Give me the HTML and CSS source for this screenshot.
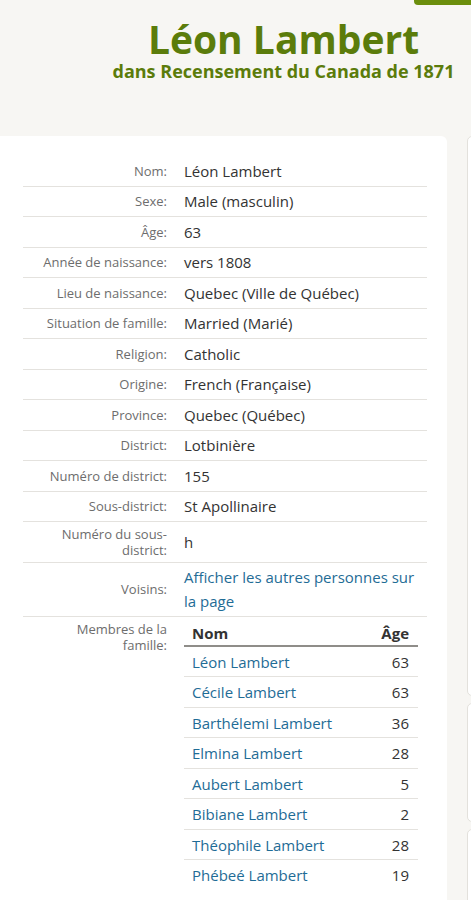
FILE: index.html
```html
<!DOCTYPE html>
<html lang="fr">
<head>
<meta charset="utf-8">
<title>Léon Lambert - Recensement du Canada de 1871</title>
<link rel="stylesheet" href="styles.css">
</head>
<body>
<div class="topbar"><span class="tab"></span></div>
<header class="title-block">
  <h1 class="title">Léon Lambert</h1>
  <p class="subtitle">dans Recensement du Canada de 1871</p>
</header>
<div class="layout">
  <main class="card record">
    <div class="row"><div class="label">Nom:</div><div class="value">Léon Lambert</div></div>
    <div class="row"><div class="label">Sexe:</div><div class="value">Male (masculin)</div></div>
    <div class="row"><div class="label">Âge:</div><div class="value">63</div></div>
    <div class="row"><div class="label">Année de naissance:</div><div class="value">vers 1808</div></div>
    <div class="row"><div class="label">Lieu de naissance:</div><div class="value">Quebec (Ville de Québec)</div></div>
    <div class="row"><div class="label">Situation de famille:</div><div class="value">Married (Marié)</div></div>
    <div class="row"><div class="label">Religion:</div><div class="value">Catholic</div></div>
    <div class="row"><div class="label">Origine:</div><div class="value">French (Française)</div></div>
    <div class="row"><div class="label">Province:</div><div class="value">Quebec (Québec)</div></div>
    <div class="row"><div class="label">District:</div><div class="value">Lotbinière</div></div>
    <div class="row"><div class="label">Numéro de district:</div><div class="value">155</div></div>
    <div class="row"><div class="label">Sous-district:</div><div class="value">St Apollinaire</div></div>
    <div class="row"><div class="label two">Numéro du sous-district:</div><div class="value">h</div></div>
    <div class="row"><div class="label">Voisins:</div><div class="value"><a class="link" href="#">Afficher les autres personnes sur la page</a></div></div>
    <div class="row row-top last"><div class="label two">Membres de la famille:</div>
      <div class="value">
        <table class="members">
          <thead><tr><th class="c-name">Nom</th><th class="c-age">Âge</th></tr></thead>
          <tbody>
            <tr><td class="c-name"><a class="link" href="#">Léon Lambert</a></td><td class="c-age">63</td></tr>
            <tr><td class="c-name"><a class="link" href="#">Cécile Lambert</a></td><td class="c-age">63</td></tr>
            <tr><td class="c-name"><a class="link" href="#">Barthélemi Lambert</a></td><td class="c-age">36</td></tr>
            <tr><td class="c-name"><a class="link" href="#">Elmina Lambert</a></td><td class="c-age">28</td></tr>
            <tr><td class="c-name"><a class="link" href="#">Aubert Lambert</a></td><td class="c-age">5</td></tr>
            <tr><td class="c-name"><a class="link" href="#">Bibiane Lambert</a></td><td class="c-age">2</td></tr>
            <tr><td class="c-name"><a class="link" href="#">Théophile Lambert</a></td><td class="c-age">28</td></tr>
            <tr><td class="c-name"><a class="link" href="#">Phébeé Lambert</a></td><td class="c-age">19</td></tr>
          </tbody>
        </table>
      </div>
    </div>
  </main>
  <aside class="side">
    <div class="side-card side-card-a"></div>
    <div class="side-card side-card-b"></div>
    <div class="side-card side-card-c"></div>
  </aside>
</div>
</body>
</html>
```
FILE: styles.css
```css
html, body {
  margin: 0;
  padding: 0;
}
body {
  background: #f7f6f3;
  font-family: "Open Sans", Lato, sans-serif;
  color: #333;
  overflow: hidden;
  width: 471px;
  height: 900px;
}
.topbar {
  display: flex;
  justify-content: flex-end;
  height: 5px;
}
.tab {
  display: block;
  width: 57px;
  height: 5px;
  background: #6b8e0c;
  border-bottom-left-radius: 4px;
}
.title-block {
  text-align: center;
  padding-left: 96px;
  padding-top: 12px;
  height: 119px;
  box-sizing: border-box;
}
.title {
  margin: 0;
  font-size: 39px;
  line-height: 44px;
  font-weight: 700;
  color: #5b7c0b;
}
.subtitle {
  margin: 0;
  font-size: 18px;
  line-height: 21px;
  font-weight: 700;
  color: #5b7c0b;
}
.layout {
  display: flex;
  gap: 20px;
  margin-left: -20px;
  margin-top: 12px;
  align-items: flex-start;
}
.card {
  background: #fff;
  border-radius: 6px;
}
.record {
  flex: 0 0 467px;
  box-sizing: border-box;
  padding: 20px 20px 20px 43px;
  min-height: 800px;
}
.row {
  display: grid;
  grid-template-columns: 152px 1fr;
  align-items: center;
  padding: 2.75px 0;
  border-bottom: 1px solid #e4e2de;
}
.row.last {
  border-bottom: none;
}
.row-top {
  align-items: start;
}
.label {
  text-align: right;
  padding: 0 8px 0 14px;
  font-size: 13px;
  line-height: 16px;
  color: #6d6d6d;
}
.label.two {
  padding: 1px 8px 1px 14px;
}
.value {
  padding: 0 9px;
  font-size: 15px;
  line-height: 24px;
  color: #333;
}
.link {
  color: #1f6c96;
  text-decoration: none;
}
.members {
  width: 100%;
  border-collapse: collapse;
}
.members th {
  font-weight: 700;
  font-size: 15px;
  line-height: 24px;
  padding: 1px 9px 0 8px;
  border-bottom: 2px solid #8f8d89;
  color: #333;
}
.members td {
  font-size: 15px;
  line-height: 24px;
  padding: 2.75px 9px 2.75px 8px;
  border-bottom: 1px solid #e4e2de;
}
.members tbody tr:last-child td {
  border-bottom: none;
}
.c-name {
  text-align: left;
}
.c-age {
  text-align: right;
}
.side {
  display: flex;
  flex-direction: column;
  gap: 7px;
  flex: 0 0 300px;
}
.side-card {
  background: #fff;
  border: 1px solid #e3e1dc;
  border-radius: 5px;
}
.side-card-a {
  height: 558px;
}
.side-card-b {
  height: 117px;
}
.side-card-c {
  height: 200px;
}
```
